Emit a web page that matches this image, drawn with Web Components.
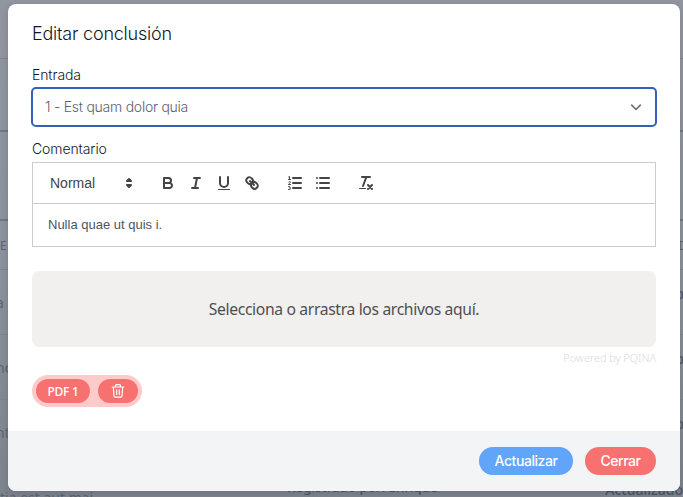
<!DOCTYPE html>
<html lang="es"><head><meta charset="utf-8"><title>Editar conclusión</title>
<style>
html,body{margin:0;height:100%;overflow:hidden}
body{font-family:Inter,"Liberation Sans",sans-serif;background:#8b909b}
</style></head><body>
<app-shell></app-shell>
<script>
const define=(name,html)=>customElements.define(name,class extends HTMLElement{
  constructor(){super();this.attachShadow({mode:'open'}).innerHTML=html;}
});

define('page-backdrop',`<style>
:host{display:grid;grid-template-columns:683px;grid-template-rows:59px 73px 89px 49px repeat(4,65px);width:683px;height:497px;overflow:hidden;background:linear-gradient(#9095a0,#8b929d 50%,#7d838d);font:14px "Noto Sans",sans-serif;color:#5c626d}
div{box-sizing:border-box;border-bottom:1px solid #7e848f;display:flex;justify-content:space-between;align-items:center;white-space:nowrap}
.s{border-bottom:2px solid #70757f}
.h{font-size:12px}
.n{margin-left:-4px}
b{color:#4c5568;font-weight:500;margin-right:-1px;padding-bottom:18px}
.last{justify-content:flex-start}
.last span{width:288px}
.last b{padding-bottom:16px;margin:0}
.last .r{width:319px;font-size:13.3px;padding-bottom:20px}
</style>
<div></div><div class="s"></div><div class="s"></div>
<div class="h"><span>E</span><span style="margin-right:-4px">D</span></div>
<div><span class="n">a</span><b>o</b></div><div><span class="n">nc</span><b>o</b></div><div><span class="n">nt</span><b>o</b></div>
<div class="last"><span>tia est aut mai</span><b class="r">Registrado por: Enrique</b><b>Actualizado</b></div>`);

define('ql-icon',`<style>
:host{display:block;width:18px;height:18px;padding:3px 5px}
svg{display:none;width:18px;height:18px;fill:none;stroke:#444;stroke-width:2;stroke-linecap:round;stroke-linejoin:round}
.f{fill:#444;stroke:none}.t{stroke-width:1}
:host([type=bold]) .bold,:host([type=italic]) .italic,:host([type=underline]) .underline,:host([type=link]) .link,:host([type=ordered]) .ordered,:host([type=bullet]) .bullet,:host([type=clean]) .clean{display:block}
</style>
<svg class="bold" viewBox="0 0 18 18"><path d="M5,4H9.5A2.5,2.5,0,0,1,12,6.5v0A2.5,2.5,0,0,1,9.5,9H5V4ZM5,9h5.5A2.5,2.5,0,0,1,13,11.5v0A2.5,2.5,0,0,1,10.5,14H5V9Z"/></svg>
<svg class="italic" viewBox="0 0 18 18"><path d="M7 4H13M5 14H11M8 14L10 4"/></svg>
<svg class="underline" viewBox="0 0 18 18"><path d="M5,3V9a4,4,0,0,0,8,0V3"/><rect class="f" x="3" y="15" width="12" height="1" rx=".5"/></svg>
<svg class="link" viewBox="0 0 18 18"><path d="M7 7L11 11"/><path d="M8.9,4.577a3.476,3.476,0,0,1,.36,4.679A3.476,3.476,0,0,1,4.577,8.9C3.185,7.5,2.035,6.4,4.217,4.217S7.5,3.185,8.9,4.577Z"/><path d="M13.423,9.1a3.476,3.476,0,0,0-4.679-.36,3.476,3.476,0,0,0,.36,4.679c1.392,1.392,2.5,2.542,4.679.36S14.815,10.5,13.423,9.1Z"/></svg>
<svg class="ordered" viewBox="0 0 18 18"><path d="M7 4H15M7 9H15M7 14H15"/><path class="t" d="M2.5 5.5H4.5M3.5 5.5V2.5L2.7 2.9M4.5 10.5H2.5C2.5 9.6 4.4 9.4 4.4 8.3C4.4 7.4 3 7.3 2.6 8M2.5 12.6H3.7C4.6 12.7 4.5 13.9 3.4 14C4.8 14.1 4.7 15.5 3.7 15.5H2.5"/></svg>
<svg class="bullet" viewBox="0 0 18 18"><path d="M6 4H15M6 9H15M6 14H15M3 4H3M3 9H3M3 14H3"/></svg>
<svg class="clean" viewBox="0 0 18 18"><path d="M5 3H13M6 12L9.35 3M11 11L15 15M15 11L11 15"/><rect class="f" x="2" y="14" width="7" height="1" rx=".5"/></svg>`);

define('select-field',`<style>
:host{display:flex;box-sizing:border-box;height:40px;margin:0 -1px;border:2px solid #3560b7;border-radius:5px;align-items:center;justify-content:space-between;padding:0 12px;color:#5b6270;font-size:14px;font-weight:300;letter-spacing:-.25px}
span{padding-bottom:1px}
svg{width:14px;height:14px}
</style><span><slot></slot></span><svg viewBox="0 0 14 14" fill="none" stroke="#6b7280" stroke-width="1.7" stroke-linecap="round" stroke-linejoin="round"><path d="M2.7 5.2L7 9.5L11.3 5.2"/></svg>`);

define('rich-editor',`<style>
:host{display:block;box-sizing:border-box;height:85px;border:1px solid #ccc}
.bar{display:flex;align-items:center;height:40px;border-bottom:1px solid #ccc;padding-left:8px;gap:15px}
.pick{display:flex;width:98px;box-sizing:border-box;padding:0 1px 0 9px;justify-content:space-between;align-items:center;font:14px "Liberation Sans",sans-serif;color:#444}
.pick svg{width:18px;height:18px;fill:#444;stroke:#444;stroke-width:2;stroke-linejoin:round}
.g{display:flex}
.body{padding:12px 15px;font:13px/18px "Liberation Sans",sans-serif;color:#4b5563}
</style><div class="bar"><div class="pick"><span>Normal</span><svg viewBox="0 0 18 18"><path d="M7 11L9 13L11 11ZM7 7L9 5L11 7Z"/></svg></div>
<div class="g"><ql-icon type="bold"></ql-icon><ql-icon type="italic"></ql-icon><ql-icon type="underline"></ql-icon><ql-icon type="link"></ql-icon></div>
<div class="g"><ql-icon type="ordered"></ql-icon><ql-icon type="bullet"></ql-icon></div><div class="g"><ql-icon type="clean"></ql-icon></div></div>
<div class="body"><slot></slot></div>`);

define('file-drop',`<style>
:host{display:block;margin-top:24px}
.z{height:76px;border-radius:7px;background:#f1f0ef;color:#4f4f4f;display:flex;align-items:center;justify-content:center;font:15.7px "Noto Sans",sans-serif;letter-spacing:-.35px}
.c{text-align:right;font:300 11px/14px "Noto Sans",sans-serif;letter-spacing:-.08px;color:#dadada;padding-top:4px}
</style><div class="z"><slot></slot></div><div class="c">Powered by PQINA</div>`);

define('file-chip',`<style>
:host{display:flex;width:max-content;margin-top:10px;box-sizing:border-box;height:32px;padding:4px;gap:8px;border-radius:16px;background:#fecaca}
span{height:24px;border-radius:12px;background:#f87171;color:#fff;display:flex;align-items:center;justify-content:center;font:500 12px "Noto Sans",sans-serif;letter-spacing:-.3px}
.n{width:54px}.d{width:40px}
svg{width:16px;height:16px}
</style><span class="n"><slot></slot></span><span class="d"><svg viewBox="0 0 16 16" fill="none" stroke="#fff" stroke-width="1.2" stroke-linecap="round" stroke-linejoin="round"><path d="M2.3 4H13.7M5.5 4V2.7Q5.5 1.7 6.5 1.7H9.5Q10.5 1.7 10.5 2.7V4M3.3 4L4 13Q4.1 14.2 5.2 14.2H10.8Q11.9 14.2 12 13L12.7 4M6.7 6.8V11.4M9.3 6.8V11.4"/></svg></span>`);

define('pill-button',`<style>
:host{display:flex;box-sizing:border-box;padding-bottom:1px;align-items:center;justify-content:center;width:94px;height:28px;border-radius:14px;background:#60a5fa;color:#fff;font-size:14px;letter-spacing:-.45px;font-weight:500}
:host([kind=danger]){width:71px;background:#f87171}
</style><slot></slot>`);

define('modal-dialog',`<style>
:host{display:flex;flex-direction:column;box-sizing:border-box;width:672px;height:487px;border-radius:8px;overflow:hidden;background:#fff;box-shadow:0 2px 6px #0002;color:#1f2937}
main{flex:1;padding:0 24px}
h2{margin:0;padding-top:18px;font-size:18px;line-height:24px;font-weight:300;letter-spacing:-.22px;color:#111827}
label{display:block;font-size:14px;line-height:20px;font-weight:300;letter-spacing:-.1px;color:#111827}
.e{margin-top:19px;margin-bottom:-2px}
.c{margin-top:12px;margin-bottom:3px}
select-field{margin-top:4px}
footer{height:60px;box-sizing:border-box;background:#f3f4f6;display:flex;gap:12px;justify-content:flex-end;align-items:center;padding:0 24px}
</style><main><h2>Editar conclusión</h2>
<label class="e">Entrada</label><select-field>1 - Est quam dolor quia</select-field>
<label class="c">Comentario</label><rich-editor>Nulla quae ut quis i.</rich-editor>
<file-drop>Selecciona o arrastra los archivos aquí.</file-drop><file-chip>PDF 1</file-chip></main>
<footer><pill-button>Actualizar</pill-button><pill-button kind="danger">Cerrar</pill-button></footer>`);

define('app-shell',`<style>
:host{display:block;position:relative;width:683px;height:497px;overflow:hidden}
modal-dialog{position:absolute;left:8px;top:4px}
</style><page-backdrop></page-backdrop><modal-dialog></modal-dialog>`);
</script></body></html>
